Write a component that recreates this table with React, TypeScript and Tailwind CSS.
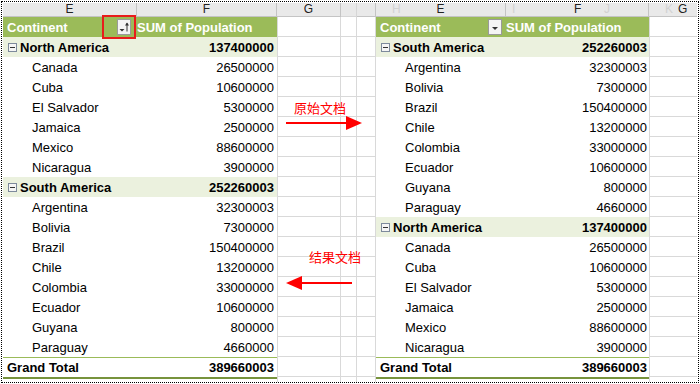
import React from 'react';

type Row =
  | { kind: 'head' }
  | { kind: 'group'; name: string; value: string }
  | { kind: 'item'; name: string; value: string }
  | { kind: 'total'; value: string };

const northAmerica: Row[] = [
  { kind: 'group', name: 'North America', value: '137400000' },
  { kind: 'item', name: 'Canada', value: '26500000' },
  { kind: 'item', name: 'Cuba', value: '10600000' },
  { kind: 'item', name: 'El Salvador', value: '5300000' },
  { kind: 'item', name: 'Jamaica', value: '2500000' },
  { kind: 'item', name: 'Mexico', value: '88600000' },
  { kind: 'item', name: 'Nicaragua', value: '3900000' },
];

const southAmerica: Row[] = [
  { kind: 'group', name: 'South America', value: '252260003' },
  { kind: 'item', name: 'Argentina', value: '32300003' },
  { kind: 'item', name: 'Bolivia', value: '7300000' },
  { kind: 'item', name: 'Brazil', value: '150400000' },
  { kind: 'item', name: 'Chile', value: '13200000' },
  { kind: 'item', name: 'Colombia', value: '33000000' },
  { kind: 'item', name: 'Ecuador', value: '10600000' },
  { kind: 'item', name: 'Guyana', value: '800000' },
  { kind: 'item', name: 'Paraguay', value: '4660000' },
];

const leftRows: Row[] = [{ kind: 'head' }, ...northAmerica, ...southAmerica, { kind: 'total', value: '389660003' }];
const rightRows: Row[] = [{ kind: 'head' }, ...southAmerica, ...northAmerica, { kind: 'total', value: '389660003' }];

const FilterButton = ({ sorted }: { sorted?: boolean }) => (
  <svg width="14" height="16" viewBox="0 0 14 16" className="block">
    <rect x="0.5" y="0.5" width="13" height="15" fill="#f4f4f4" stroke="#9a9a9a" />
    {sorted ? (
      <>
        <polygon points="2.5,10 7.5,10 5,12.5" fill="#333" />
        <line x1="10" y1="4" x2="10" y2="12.5" stroke="#333" strokeWidth="1" />
        <polygon points="8,6.5 10,3.5 12,6.5" fill="#333" />
      </>
    ) : (
      <polygon points="4,8 10,8 7,11" fill="#333" />
    )}
  </svg>
);

const MinusBox = () => (
  <svg width="9" height="9" viewBox="0 0 9 9" className="block mr-[3px] shrink-0">
    <rect x="0.5" y="0.5" width="8" height="8" fill="#f5f5f5" stroke="#7d8a9c" />
    <line x1="2" y1="4.5" x2="7" y2="4.5" stroke="#333" />
  </svg>
);

function PivotCells({ row, eW, fW, fPad, left }: { row: Row; eW: string; fW: string; fPad: string; left?: boolean }) {
  if (row.kind === 'head') {
    return (
      <>
        <div className={`${eW} h-full bg-[#9bbb59] text-white font-bold flex items-center pl-[4px] pt-[1px] relative`}>
          Continent
          <div className={`absolute top-[2px] ${left ? 'right-[6px]' : 'right-[4px]'}`}>
            <FilterButton sorted={left} />
          </div>
          {left && <div className="absolute left-[99px] top-[-2px] w-[34px] h-[24px] border-2 border-[#e81c1c]" />}
        </div>
        <div className={`${fW} h-full bg-[#9bbb59] text-white font-bold flex items-center pt-[1px] whitespace-nowrap`}>
          SUM of Population
        </div>
      </>
    );
  }
  if (row.kind === 'group') {
    return (
      <>
        <div className={`${eW} h-full bg-[#ebf1de] font-bold flex items-center pl-[5px]`}>
          <MinusBox />
          <span className="pt-[1px]">{row.name}</span>
        </div>
        <div className={`${fW} h-full bg-[#ebf1de] font-bold flex items-center justify-end pt-[1px] ${fPad}`}>{row.value}</div>
      </>
    );
  }
  if (row.kind === 'item') {
    return (
      <>
        <div className={`${eW} h-full bg-white flex items-center pl-[29px] pt-[1px]`}>{row.name}</div>
        <div className={`${fW} h-full bg-white flex items-center justify-end pt-[1px] ${fPad}`}>{row.value}</div>
      </>
    );
  }
  return (
    <>
      <div className={`${eW} h-full bg-white font-bold flex items-center pl-[4px] pt-[1px] border-t border-[#9bbb59]`}>Grand Total</div>
      <div className={`${fW} h-full bg-white font-bold flex items-center justify-end pt-[1px] ${fPad} border-t border-[#9bbb59]`}>
        {row.value}
      </div>
    </>
  );
}

const grid = 'h-full border-b border-r border-[#d9d9d9] bg-white';

export default function App() {
  return (
    <div className="w-[700px] h-[384px] bg-white pt-[1px] pl-[1px] relative text-[13px] text-black font-['Liberation_Sans',Arial,sans-serif]">
      <div className="w-[698px] h-[382px] border border-dotted border-black pt-[1px] pl-[1px] flex flex-col">
        {/* column letters */}
        <div className="flex h-[14px] text-[12px] leading-[13px] text-[#222] shrink-0">
          <div className="w-[134px] bg-[#e9e9e9] border-r border-b border-[#c4c4c4] text-center">E</div>
          <div className="w-[140px] bg-[#e9e9e9] border-r border-b border-[#c4c4c4] text-center">F</div>
          <div className="w-[64px] bg-[#e9e9e9] border-r border-b border-[#c4c4c4] text-center">G</div>
          <div className="w-[16px] bg-[#e9e9e9] border-r border-b border-[#d6d6d6]" />
          <div className="w-[19px] bg-[#e9e9e9] border-r border-b border-[#c4c4c4]" />
          <div className="w-[130px] bg-[#e9e9e9] border-r border-b border-[#c4c4c4] text-center relative">
            <span className="absolute left-[16px] text-[#d2d2d2]">H</span>E
          </div>
          <div className="w-[143px] bg-[#e9e9e9] border-r border-b border-[#c4c4c4] relative">
            <span className="absolute left-[6px] text-[#d2d2d2]">I</span>
            <span className="absolute left-[68px]">F</span>
            <span className="absolute left-[98px] text-[#d2d2d2]">J</span>
          </div>
          <div className="w-[48px] bg-[#e9e9e9] border-b border-[#c4c4c4] relative">
            <span className="absolute left-[16px] text-[#d2d2d2]">K</span>
            <span className="absolute left-[29px]">G</span>
          </div>
        </div>

        {leftRows.map((lr, i) => (
          <div key={i} className="flex h-[20px] shrink-0 whitespace-nowrap">
            <PivotCells row={lr} eW="w-[134px]" fW="w-[140px]" fPad="pr-[3px]" left />
            <div className={`w-[64px] border-l ${grid}`} />
            <div className={`w-[16px] ${grid}`} />
            <div className={`w-[19px] ${grid}`} />
            <PivotCells row={rightRows[i]} eW="w-[130px]" fW="w-[143px]" fPad="pr-[2px]" />
            <div className="w-[48px] h-full border-l border-b border-[#d9d9d9]" />
          </div>
        ))}

        {/* bottom edge */}
        <div className="flex flex-1">
          <div className="w-[274px] border-t-2 border-[#77933c]" />
          <div className="w-[64px] border-l border-r border-[#d9d9d9]" />
          <div className="w-[16px] border-r border-[#d9d9d9]" />
          <div className="w-[19px] border-r border-[#d9d9d9]" />
          <div className="w-[273px] border-t-2 border-[#77933c]" />
          <div className="w-[48px] border-l border-[#d9d9d9]" />
        </div>
      </div>

      {/* annotations */}
      <div className="absolute left-[294px] top-[100px] leading-[16px] text-[13px] text-[#ff0000] font-['Noto_Sans_CJK_SC',sans-serif]">
        原始文档
      </div>
      <svg className="absolute left-[284px] top-[115px]" width="80" height="18" viewBox="0 0 80 18">
        <line x1="2" y1="8" x2="66" y2="8" stroke="#ff0000" strokeWidth="2" />
        <polygon points="62,1 78,8 62,15" fill="#ff0000" />
      </svg>
      <div className="absolute left-[309px] top-[249px] leading-[16px] text-[13px] text-[#ff0000] font-['Noto_Sans_CJK_SC',sans-serif]">
        结果文档
      </div>
      <svg className="absolute left-[284px] top-[275px]" width="72" height="18" viewBox="0 0 72 18">
        <line x1="14" y1="8" x2="68" y2="8" stroke="#ff0000" strokeWidth="2" />
        <polygon points="2,8 18,1 18,15" fill="#ff0000" />
      </svg>
    </div>
  );
}
